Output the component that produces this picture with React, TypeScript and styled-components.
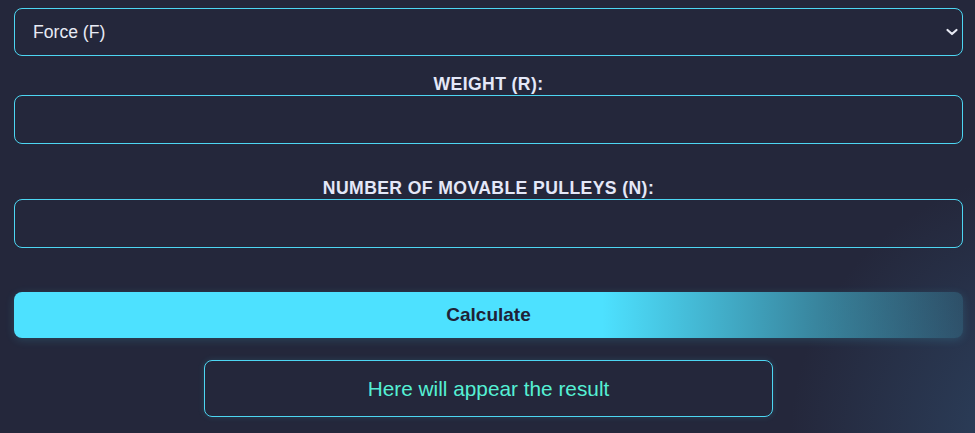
import React from "react";
import styled, { createGlobalStyle } from "styled-components";

const Global = createGlobalStyle`
  html, body { margin: 0; padding: 0; }
  body {
    min-height: 433px;
    background-color: #24273b;
    background-image: radial-gradient(circle at 1060px 440px, #2d4462 0px, rgba(36,39,59,0) 270px);
    background-repeat: no-repeat;
    font-family: "Liberation Sans", Arial, sans-serif;
  }
`;

const Form = styled.div`
  display: flex;
  flex-direction: column;
  padding: 8px 12px 0 14px;
`;

const Field = styled.div<{ $gap: number }>`
  display: flex;
  flex-direction: column;
  margin-bottom: ${(p) => p.$gap}px;
`;

const SelectWrap = styled.div`
  position: relative;
  margin-bottom: 17px;
`;

const Select = styled.select`
  appearance: none;
  width: 100%;
  height: 48px;
  box-sizing: border-box;
  background: transparent;
  border: 1px solid #4dd6f2;
  border-radius: 8px;
  color: #e8ebf5;
  font-family: "Liberation Sans", Arial, sans-serif;
  font-size: 17.6px;
  padding: 0 40px 0 18px;
  outline: none;
`;

const Chevron = styled.svg`
  position: absolute;
  right: 4px;
  top: 19px;
  pointer-events: none;
`;

const Label = styled.label`
  display: block;
  text-align: center;
  color: #e4e8f8;
  font-weight: 700;
  font-size: 17.6px;
  letter-spacing: 0.4px;
  line-height: 22px;
`;

const Input = styled.input`
  width: 100%;
  height: 49px;
  box-sizing: border-box;
  background: transparent;
  border: 1px solid #4dd6f2;
  border-radius: 8px;
  color: #e8ebf5;
  font-size: 17.6px;
  padding: 0 18px;
  outline: none;
`;

const Button = styled.button`
  height: 46px;
  border: none;
  border-radius: 8px;
  background: linear-gradient(90deg, #4de1ff 62%, rgba(77, 225, 255, 0.17) 100%);
  box-shadow: 0 2px 10px rgba(77, 225, 255, 0.16);
  color: #1f2236;
  font-family: "Liberation Sans", Arial, sans-serif;
  font-weight: 700;
  font-size: 19px;
  cursor: pointer;
  margin-bottom: 22px;
`;

const Result = styled.div`
  align-self: center;
  width: 60%;
  height: 57px;
  box-sizing: border-box;
  border: 1px solid #4dd6f2;
  border-radius: 8px;
  box-shadow: 0 0 6px rgba(77, 214, 242, 0.15);
  display: flex;
  align-items: center;
  justify-content: center;
  color: #55f0d4;
  font-size: 20.8px;
`;

export default function App() {
  return (
    <>
      <Global />
      <Form>
        <SelectWrap>
          <Select defaultValue="F">
            <option value="F">Force (F)</option>
            <option value="R">Weight (R)</option>
            <option value="N">Number of movable pulleys (N)</option>
          </Select>
          <Chevron width="14" height="10" viewBox="0 0 14 10">
            <path d="M2.5 3 L7 7 L11.5 3" fill="none" stroke="#e6e8f2" strokeWidth="2.2" strokeLinecap="round" strokeLinejoin="round" />
          </Chevron>
        </SelectWrap>
        <Field $gap={33}>
          <Label htmlFor="weight">WEIGHT (R):</Label>
          <Input id="weight" type="number" />
        </Field>
        <Field $gap={44}>
          <Label htmlFor="pulleys">NUMBER OF MOVABLE PULLEYS (N):</Label>
          <Input id="pulleys" type="number" />
        </Field>
        <Button>Calculate</Button>
        <Result>Here will appear the result</Result>
      </Form>
    </>
  );
}
